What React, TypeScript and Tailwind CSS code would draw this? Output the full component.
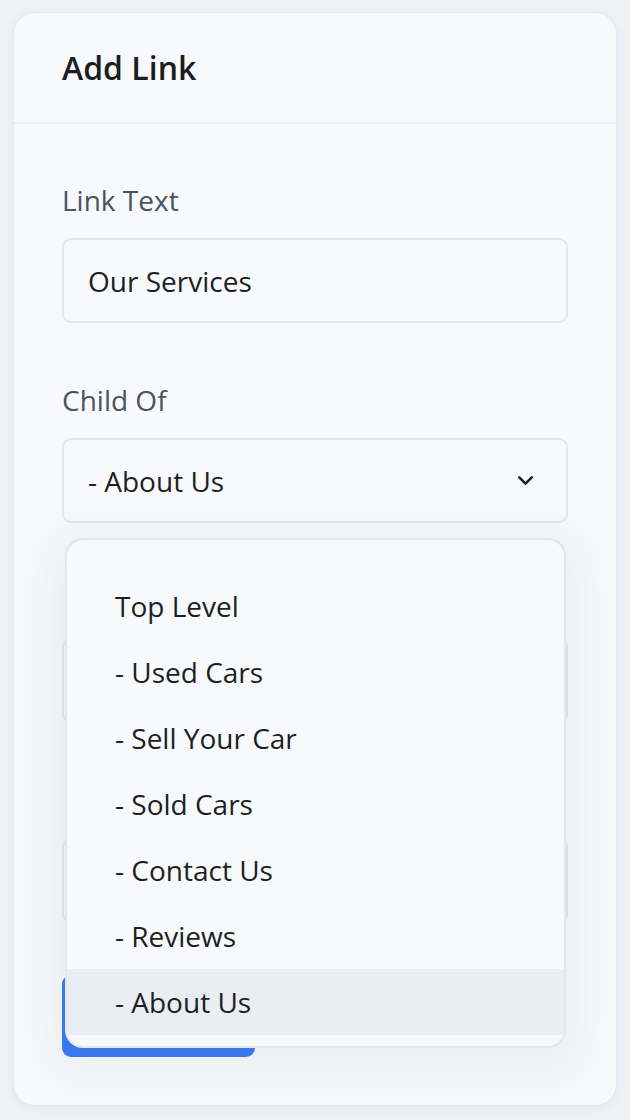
import { ChevronDown } from 'lucide-react'

const OPTIONS = ['Top Level', '- Used Cars', '- Sell Your Car', '- Sold Cars', '- Contact Us', '- Reviews', '- About Us']

function Field({ label, value, select }: { label?: string; value?: string; select?: boolean }) {
  return (
    <div className="flex flex-col">
      <label className="h-[36px] flex items-center text-[28px] text-[#4a5361]">{label}</label>
      <div className="mt-[20px] h-[85px] rounded-[9px] border-2 border-[#e3e5ea] bg-[#f8f9fc] flex items-center justify-between pl-[24px] pr-[28px] text-[28px] text-[#1d1f23]">
        <span>{value}</span>
        {select && <ChevronDown size={25} strokeWidth={2.5} className="text-[#1d1f23]" />}
      </div>
    </div>
  )
}

export default function App() {
  const selected = '- About Us'
  return (
    <div className="min-h-screen bg-[#eef1f7] px-[13px] pt-[12px] pb-[14px] font-['Open_Sans',sans-serif]">
      <div className="rounded-[22px] border border-[#e6e8ee] bg-[#f8f9fc] shadow-[0_2px_10px_rgba(30,40,80,0.05)]">
        {/* Header */}
        <div className="h-[111px] px-[48px] flex items-center border-b-2 border-[#eceef3]">
          <h1 className="text-[32px] font-semibold text-[#1c1d20]">Add Link</h1>
        </div>

        {/* Form */}
        <div className="px-[48px] pt-[58px] pb-[48px] flex flex-col gap-[59px]">
          <Field label="Link Text" value="Our Services" />
          <div className="relative z-10">
            <Field label="Child Of" value={selected} select />
            {/* Open dropdown */}
            <div className="absolute left-[3px] right-[2px] top-[156px] rounded-[18px] border-2 border-[#e4e6eb] bg-[#f8f9fc] pt-[33px] pb-[11px] shadow-[0_12px_44px_18px_rgba(20,30,60,0.05)]">
              {OPTIONS.map(o => (
                <div key={o}
                  className={`h-[66px] px-[48px] flex items-center text-[28px] text-[#1d1f23] ${o === selected ? 'bg-[#eaedf4]' : ''}`}>
                  {o}
                </div>
              ))}
            </div>
          </div>
          {/* fields hidden under the open menu */}
          <Field />
          <Field select />
          <button className="-mt-[7px] block h-[82px] w-[193px] rounded-[9px] bg-[#3b7cf2]" />
        </div>
      </div>
    </div>
  )
}
